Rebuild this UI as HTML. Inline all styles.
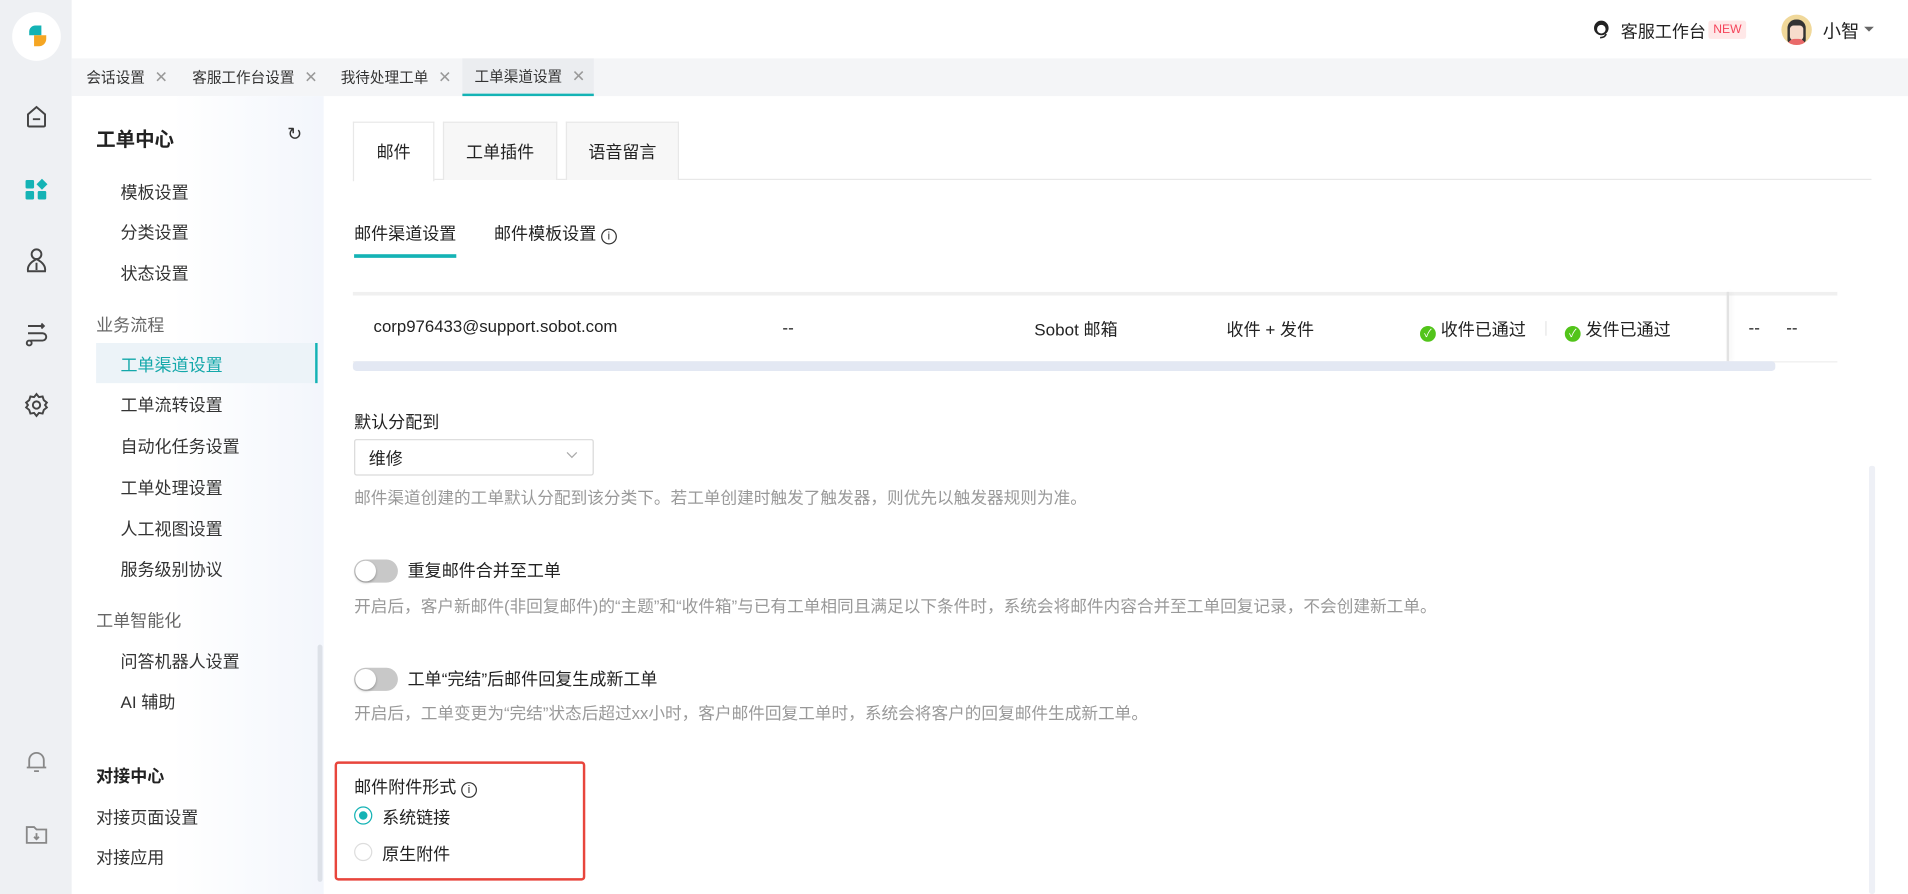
<!DOCTYPE html>
<html><head><meta charset="utf-8"><style>
*{margin:0;padding:0;box-sizing:border-box}
html,body{width:1908px;height:894px;overflow:hidden;background:#fff}
#w{position:absolute;left:0;top:0;width:1568px;height:735px;transform:scale(1.2168,1.2163);transform-origin:0 0;font-family:"Liberation Sans","Noto Sans CJK SC",sans-serif;font-size:14px;color:#222;background:#fff}
.a{position:absolute;white-space:nowrap}
.g{color:#999;font-size:13.7px}
.tab{position:absolute;top:48px;height:31px;line-height:31px;font-size:12px;color:#333}
.tab i{font-style:normal;color:#999;margin-left:8px;font-size:13px}
.si{position:absolute;left:99px;font-size:14px;color:#333}
.card{position:absolute;top:100px;height:48px;line-height:48px;text-align:center;background:#f7f7f7;border:1px solid #e8e8e8;border-bottom:none;font-size:14px}
.tg{position:absolute;left:291px;width:36px;height:19px;border-radius:10px;background:#c8c8c8}
.tg:after{content:"";position:absolute;left:1px;top:1px;width:17px;height:17px;border-radius:50%;background:#fff;box-shadow:0 1px 2px rgba(0,0,0,.3)}
.ck{display:inline-block;width:13px;height:13px;border-radius:50%;background:#52c41a;color:#fff;font-size:9px;line-height:13px;text-align:center;vertical-align:-1px;margin-right:4px}
</style></head><body><div id="w">
<div class="a" style="left:0;top:0;width:59px;height:735px;background:#eef0f3"></div>
<div class="a" style="left:10px;top:10px;width:40px;height:40px;border-radius:50%;background:#fff"></div>
<div class="a" style="left:24px;top:21px;width:10px;height:8px;background:#14b3b5;border-radius:5px 0 0 0"></div>
<div class="a" style="left:28px;top:29px;width:10px;height:9px;background:#f5a623;border-radius:0 0 6px 0"></div>
<svg class="a" style="left:19px;top:85px" width="22" height="22" viewBox="0 0 22 22" fill="none" stroke="#444" stroke-width="1.6"><path d="M4 9 L11 3 L18 9 V18 Q18 19 17 19 H5 Q4 19 4 18Z"/><path d="M8 13h6"/></svg>
<svg class="a" style="left:19px;top:145px" width="22" height="22" viewBox="0 0 22 22" fill="#14b3b5"><rect x="2" y="3" width="7" height="7" rx="1"/><path d="M15.5 2 L20 6.5 L15.5 11 L11 6.5Z"/><rect x="2" y="12" width="7" height="7" rx="1"/><rect x="12" y="12" width="7" height="7" rx="1"/></svg>
<svg class="a" style="left:19px;top:203px" width="22" height="24" viewBox="0 0 22 24" fill="none" stroke="#444" stroke-width="1.6"><circle cx="11" cy="6" r="4"/><path d="M11 10 Q3 14 4 20 H18 Q19 14 11 10Z"/><path d="M11 13v6"/></svg>
<svg class="a" style="left:19px;top:263px" width="22" height="24" viewBox="0 0 22 24" fill="none" stroke="#444" stroke-width="1.6"><path d="M4 5h12M4 11h12a3 3 0 0 1 0 6H6"/><circle cx="5" cy="19" r="2"/><path d="M15 3l2 2-2 2"/></svg>
<svg class="a" style="left:19px;top:322px" width="22" height="22" viewBox="0 0 22 22" fill="none" stroke="#444" stroke-width="1.6"><circle cx="11" cy="11" r="3"/><path d="M11 2l2 2.5 3-.5 1 3 2.5 2-1.5 2 1.5 2-2.5 2-1 3-3-.5-2 2.5-2-2.5-3 .5-1-3L2.5 13 4 11 2.5 9 5 7l1-3 3 .5z"/></svg>
<svg class="a" style="left:19px;top:615px" width="22" height="22" viewBox="0 0 22 22" fill="none" stroke="#888" stroke-width="1.5"><path d="M5 16V10a6 6 0 0 1 12 0v6H5zM3 16h16M9 19h4"/></svg>
<svg class="a" style="left:19px;top:675px" width="22" height="22" viewBox="0 0 22 22" fill="none" stroke="#888" stroke-width="1.5"><path d="M3 5h6l2 2h8v11H3z"/><path d="M11 10v5M9 13l2 2 2-2"/></svg>

<div class="a" style="left:59px;top:0;width:1509px;height:48px;background:#fff"></div>
<svg class="a" style="left:1307px;top:15px" width="18" height="18" viewBox="0 0 18 18"><circle cx="9" cy="8" r="6" fill="#222"/><circle cx="9" cy="9" r="3.5" fill="#fff"/><path d="M13 13 Q12 16 8 16" stroke="#222" fill="none" stroke-width="1.3"/></svg>
<div class="a" style="left:1332px;top:16px;font-size:14px">客服工作台</div>
<div class="a" style="left:1404px;top:17px;background:#ffe8e8;color:#f5445a;font-size:10px;padding:2px 4px;border-radius:2px">NEW</div>
<div class="a" style="left:1464px;top:12px;width:25px;height:25px;border-radius:50%;background:#f0d89a;overflow:hidden"><div style="position:absolute;left:5px;top:4px;width:15px;height:19px;background:#333;border-radius:7px 7px 2px 2px"></div><div style="position:absolute;left:7px;top:9px;width:11px;height:12px;background:#f7dccc;border-radius:3px"></div><div style="position:absolute;left:5px;top:20px;width:15px;height:8px;background:#e96a6a;border-radius:6px 6px 0 0"></div></div>
<div class="a" style="left:1498px;top:15px;font-size:15px">小智</div>
<div class="a" style="left:1532px;top:22px;border:4px solid transparent;border-top-color:#666"></div>

<div class="a" style="left:59px;top:48px;width:1509px;height:31px;background:#f4f5f7"></div>
<div class="tab" style="left:71px">会话设置<i>✕</i></div>
<div class="tab" style="left:158px">客服工作台设置<i>✕</i></div>
<div class="tab" style="left:280px">我待处理工单<i>✕</i></div>
<div class="tab" style="left:380px;width:108px;padding-left:10px;background:#ebedf0;border-bottom:2px solid #14b3b5;line-height:29px">工单渠道设置<i>✕</i></div>

<div class="a" style="left:59px;top:79px;width:207px;height:656px;background:linear-gradient(90deg,#fff 40%,#f3f6fc)"></div>
<div class="a" style="left:79px;top:101px;font-size:16px;font-weight:bold">工单中心</div>
<div class="a" style="left:236px;top:101px;font-size:15px;color:#333">↻</div>
<div class="si" style="top:148px">模板设置</div>
<div class="si" style="top:181px">分类设置</div>
<div class="si" style="top:215px">状态设置</div>
<div class="a" style="left:79px;top:257px;color:#666">业务流程</div>
<div class="a" style="left:79px;top:282px;width:182px;height:33px;background:#ecf3f8;border-right:2px solid #14b3b5"></div>
<div class="si" style="top:290px;color:#14a8aa">工单渠道设置</div>
<div class="si" style="top:323px">工单流转设置</div>
<div class="si" style="top:357px">自动化任务设置</div>
<div class="si" style="top:391px">工单处理设置</div>
<div class="si" style="top:425px">人工视图设置</div>
<div class="si" style="top:458px">服务级别协议</div>
<div class="a" style="left:79px;top:500px;color:#666">工单智能化</div>
<div class="si" style="top:534px">问答机器人设置</div>
<div class="si" style="top:567px">AI 辅助</div>
<div class="a" style="left:79px;top:628px;font-weight:bold">对接中心</div>
<div class="a" style="left:79px;top:662px;color:#333">对接页面设置</div>
<div class="a" style="left:79px;top:695px;color:#333">对接应用</div>
<div class="a" style="left:261px;top:530px;width:4px;height:195px;background:#dde1e8;border-radius:2px"></div>

<div class="a" style="left:290px;top:147px;width:1248px;height:1px;background:#e8e8e8"></div>
<div class="card" style="left:290px;width:67px;background:#fff;height:49px">邮件</div>
<div class="card" style="left:364px;width:94px">工单插件</div>
<div class="card" style="left:465px;width:93px">语音留言</div>
<div class="a" style="left:291px;top:182px">邮件渠道设置</div>
<div class="a" style="left:291px;top:209px;width:84px;height:3px;background:#14b3b5"></div>
<div class="a" style="left:406px;top:182px">邮件模板设置 <span style="display:inline-block;width:13px;height:13px;border:1px solid #333;border-radius:50%;font-size:9px;line-height:11px;text-align:center">i</span></div>

<div class="a" style="left:290px;top:240px;width:1220px;height:3px;background:#f0f0f0"></div>
<div class="a" style="left:290px;top:297px;width:1220px;height:1px;background:#eee"></div>
<div class="a" style="left:307px;top:261px;font-size:13.8px">corp976433@support.sobot.com</div>
<div class="a" style="left:643px;top:261px">--</div>
<div class="a" style="left:850px;top:261px">Sobot 邮箱</div>
<div class="a" style="left:1008px;top:261px">收件 + 发件</div>
<div class="a" style="left:1167px;top:261px"><span class="ck">✓</span>收件已通过</div>
<div class="a" style="left:1270px;top:264px;width:1px;height:12px;background:#e5e5e5"></div>
<div class="a" style="left:1286px;top:261px"><span class="ck">✓</span>发件已通过</div>
<div class="a" style="left:1419px;top:240px;width:2px;height:57px;background:#e2e2e2;box-shadow:2px 0 4px rgba(0,0,0,.06)"></div>
<div class="a" style="left:1437px;top:261px">--</div>
<div class="a" style="left:1468px;top:261px">--</div>
<div class="a" style="left:290px;top:297px;width:1169px;height:8px;background:#e3e8f3;border-radius:3px"></div>

<div class="a" style="left:291px;top:337px">默认分配到</div>
<div class="a" style="left:291px;top:361px;width:197px;height:30px;border:1px solid #d9d9d9;border-radius:2px"></div>
<div class="a" style="left:303px;top:367px">维修</div>
<svg class="a" style="left:465px;top:371px" width="10" height="7"><path d="M1 1l4 4 4-4" stroke="#aaa" fill="none"/></svg>
<div class="a g" style="left:291px;top:398px">邮件渠道创建的工单默认分配到该分类下。若工单创建时触发了触发器，则优先以触发器规则为准。</div>

<div class="tg" style="top:460px"></div>
<div class="a" style="left:335px;top:459px">重复邮件合并至工单</div>
<div class="a g" style="left:291px;top:487px">开启后，客户新邮件(非回复邮件)的“主题”和“收件箱”与已有工单相同且满足以下条件时，系统会将邮件内容合并至工单回复记录，不会创建新工单。</div>
<div class="tg" style="top:549px"></div>
<div class="a" style="left:335px;top:548px">工单“完结”后邮件回复生成新工单</div>
<div class="a g" style="left:291px;top:575px">开启后，工单变更为“完结”状态后超过xx小时，客户邮件回复工单时，系统会将客户的回复邮件生成新工单。</div>

<div class="a" style="left:275px;top:626px;width:206px;height:98px;border:2px solid #e8453c;border-radius:3px"></div>
<div class="a" style="left:291px;top:637px">邮件附件形式 <span style="display:inline-block;width:13px;height:13px;border:1px solid #333;border-radius:50%;font-size:9px;line-height:11px;text-align:center">i</span></div>
<div class="a" style="left:291px;top:663px;width:15px;height:15px;border:1px solid #14b3b5;border-radius:50%"><div style="position:absolute;left:3px;top:3px;width:7px;height:7px;border-radius:50%;background:#14b3b5"></div></div>
<div class="a" style="left:314px;top:662px">系统链接</div>
<div class="a" style="left:291px;top:693px;width:15px;height:15px;border:1px solid #ddd;border-radius:50%"></div>
<div class="a" style="left:314px;top:692px">原生附件</div>

<div class="a" style="left:1536px;top:383px;width:5px;height:352px;background:#eef0f6;border-radius:2px"></div>
</div></body></html>
